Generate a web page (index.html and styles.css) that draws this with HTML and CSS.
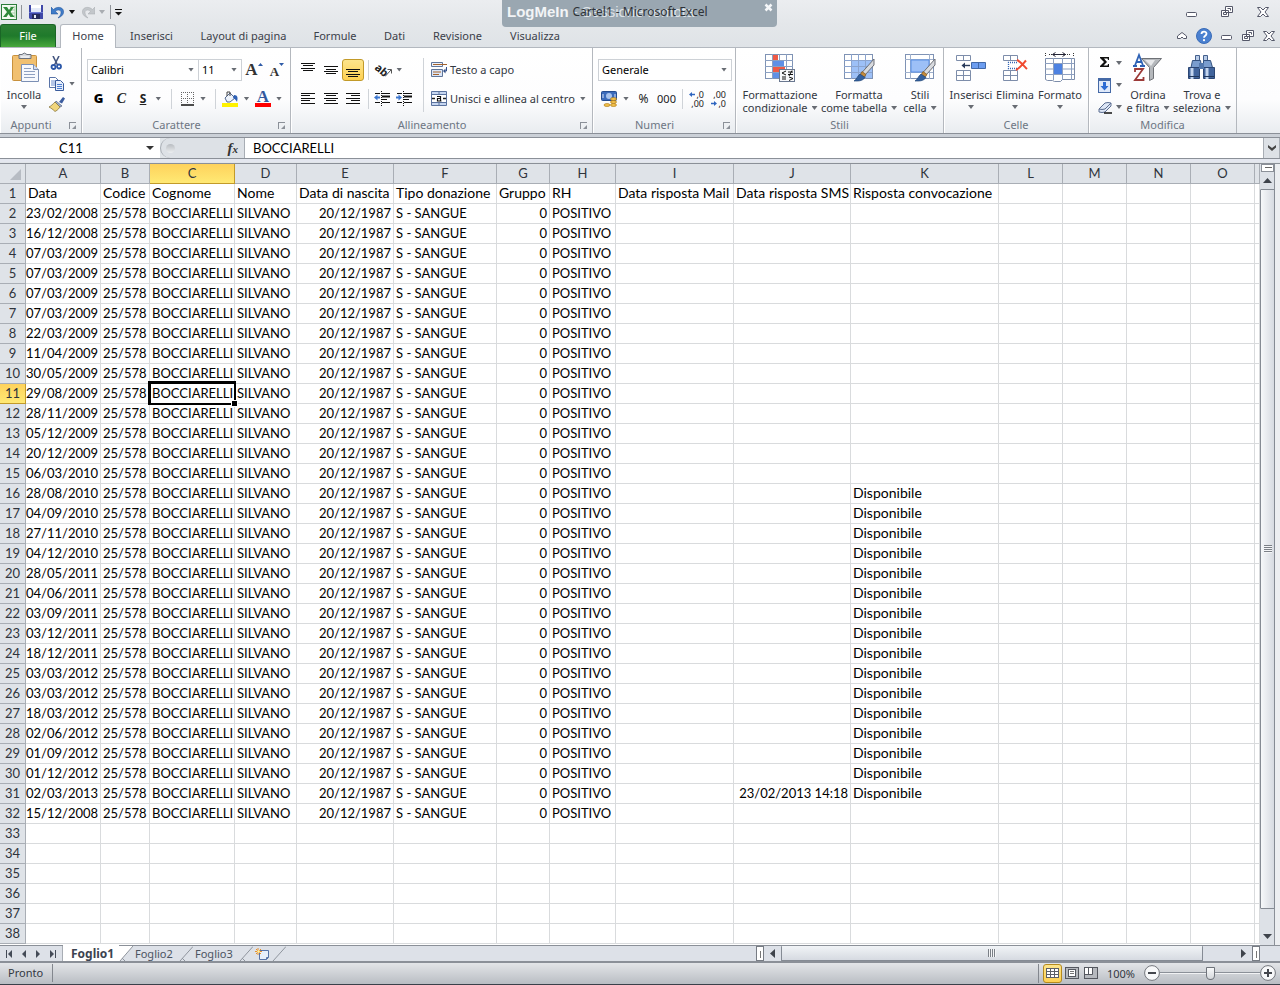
FILE: index.html
```html
<!DOCTYPE html>
<html lang="it">
<head>
<meta charset="utf-8">
<meta name="viewport" content="width=device-width, initial-scale=1">
<title>Cartel1 - Microsoft Excel</title>
<link rel="stylesheet" href="styles.css">
</head>
<body>
<header class="titlebar">
  <div class="quick">
    <svg width="16" height="16" viewBox="0 0 16 16"><rect x=".5" y=".5" width="15" height="15" fill="#f3faf1" stroke="#2d7c3b"/><path d="M9 3h5M9 6h5M9 9h5M9 12h5M14 2v12" stroke="#a5cfa5" fill="none"/><path d="M2 3h4l2 3 2-3h3L9.500 8l4 5H9.500L7.500 10l-2 3H2l4-5z" fill="#2f8a3a"/></svg>
    <span class="qsep"></span>
    <button class="qbtn" aria-label="Salva"><svg width="14" height="14" viewBox="0 0 14 14"><path d="M0 0h14v14H1l-1-1z" fill="#3f48a8"/><path d="M2 0h10v7H2z" fill="#e4eaf8"/><path d="M2 0h10v3H2z" fill="#fff"/><path d="M0 7h14v1H0z" fill="#6b79d2"/><path d="M3 9h8v5H3z" fill="#262b5c"/><path d="M5 10h2v3H5z" fill="#e8ecf6"/></svg></button>
    <button class="qbtn wide" aria-label="Annulla"><svg width="14" height="13" viewBox="0 0 14 13"><path d="M0 1v7h7L4.500 5.500C7 3 10.500 4 10 7c-.3 2-1.500 3.500-3 5 4-1.500 6-4 5.500-7C12 1 6 0 2.500 3.500z" fill="#3f7cc8" stroke="#1f4e94" stroke-width=".5"/></svg><i class="arr black"></i></button>
    <button class="qbtn wide" aria-label="Ripeti"><svg width="14" height="13" viewBox="0 0 14 13"><path d="M14 1v7H7l2.500-2.500C7 3 3.500 4 4 7c.3 2 1.500 3.500 3 5-4-1.500-6-4-5.500-7C2 1 8 0 11.500 3.500z" fill="#c3c7cb" stroke="#a7abaf" stroke-width=".5"/></svg><i class="arr pale"></i></button>
    <span class="qsep"></span>
    <button class="qbtn slim" aria-label="Personalizza"><svg width="7" height="7" viewBox="0 0 7 7"><path d="M0 .5h7" stroke="#111"/><path d="M0 3h7L3.500 6.500z" fill="#111"/></svg></button>
  </div>
  <div class="logmein"><span class="brand">LogMeIn</span><span class="session">- Sessione remota</span><button class="lclose" aria-label="Chiudi"><svg width="9" height="9" viewBox="0 0 9 9"><path d="M1.500 1.500l6 6M7.500 1.500l-6 6" stroke="#f5f7f9" stroke-width="2.500"/></svg></button></div>
  <h1 class="doc">Cartel1 - Microsoft Excel</h1>
  <div class="winbtns">
    <button aria-label="Riduci a icona"><svg width="12" height="12" viewBox="0 0 12 12"><rect x="1.500" y="6.500" width="10" height="4" rx="1" fill="#fff" stroke="#555869"/></svg></button>
    <button aria-label="Ripristina"><svg width="12" height="12" viewBox="0 0 12 12"><path d="M4.500.5h7v6h-7zM.5 4.500h7v6h-7z" fill="#fff" stroke="#555869"/><path d="M6.500 2.500h3v2M2.500 6.500h3v2h-3z" fill="none" stroke="#555869"/></svg></button>
    <button aria-label="Chiudi finestra"><svg width="12" height="12" viewBox="0 0 12 12"><path d="M.5 1.500h3L6 4l2.500-2.500h3L8 6l3.500 4.500h-3L6 8l-2.500 2.500h-3L4 6z" fill="#fff" stroke="#555869"/></svg></button>
  </div>
</header>

<nav class="tabs">
  <button class="tab file">File</button>
  <button class="tab home">Home</button>
  <button class="tab t3">Inserisci</button>
  <button class="tab t4">Layout di pagina</button>
  <button class="tab t5">Formule</button>
  <button class="tab t6">Dati</button>
  <button class="tab t7">Revisione</button>
  <button class="tab t8">Visualizza</button>
  <div class="tabbtns">
    <button aria-label="Riduci barra multifunzione"><svg width="10" height="10" viewBox="0 0 10 10"><path d="M.5 5L5 1.500 9.500 5v2.500h-3L5 6 3.500 7.500h-3z" fill="#fff" stroke="#555869"/></svg></button>
    <button aria-label="Guida"><svg width="16" height="16" viewBox="0 0 16 16"><circle cx="8" cy="8" r="7.500" fill="#4a80d0" stroke="#3a6cb8"/><path d="M5.500 6c0-3.300 5-3.200 5-.2 0 2-2.500 2-2.500 4" fill="none" stroke="#fff" stroke-width="1.800"/><circle cx="8" cy="12.200" r="1.100" fill="#fff"/></svg></button>
    <button aria-label="Riduci cartella"><svg width="12" height="12" viewBox="0 0 12 12"><rect x=".5" y="5.500" width="10" height="4" rx="1" fill="#fff" stroke="#555869"/></svg></button>
    <button aria-label="Ripristina cartella"><svg width="12" height="12" viewBox="0 0 12 12"><path d="M4.500.5h7v6h-7zM.5 4.500h7v6h-7z" fill="#fff" stroke="#555869"/><path d="M6.500 2.500h3v2M2.500 6.500h3v2h-3z" fill="none" stroke="#555869"/></svg></button>
    <button aria-label="Chiudi cartella"><svg width="12" height="12" viewBox="0 0 12 12"><path d="M.5 1.500h3L6 4l2.500-2.500h3L8 6l3.500 4.500h-3L6 8l-2.500 2.500h-3L4 6z" fill="#fff" stroke="#555869"/></svg></button>
  </div>
</nav>

<section class="ribbon">
  <div class="group g-app">
    <div class="body">
      <button class="big b48"><svg width="32" height="32" viewBox="0 0 32 32"><rect x="4.500" y="3.500" width="24" height="25" rx="1" fill="#f1c070" stroke="#c8913d"/><path d="M11 2.500h3q2-3 5 0h4v4H11z" fill="#d6d9de" stroke="#6d737d"/><path d="M13 5h8" stroke="#fff"/><path d="M13.500 12.500h12l5 5v12h-17z" fill="#f7f9fd" stroke="#7b8fb4"/><path d="M25.500 12.500v5h5" fill="#d5def0" stroke="#7b8fb4"/><path d="M16 16.500h7M16 19.500h11M16 22.500h11M16 25.500h11" stroke="#8fa0c0"/></svg><span>Incolla</span><i class="arr"></i></button>
      <div class="stack">
        <button class="ib" aria-label="Taglia"><svg width="14" height="14" viewBox="0 0 14 14"><path d="M4 0l4.500 9M10 0L5.500 9" stroke="#455780" stroke-width="1.600"/><circle cx="4.500" cy="11" r="2" fill="none" stroke="#2b57a8" stroke-width="1.800"/><circle cx="10" cy="10.500" r="2" fill="none" stroke="#2b57a8" stroke-width="1.800"/></svg></button>
        <button class="ib" aria-label="Copia"><svg width="16" height="14" viewBox="0 0 16 14"><path d="M.5.500h6l3 3v7h-9z" fill="#fff" stroke="#5873a8"/><path d="M2 4h4M2 6h4M2 8h4" stroke="#6d8fd0"/><path d="M6.500 3.500h5l3 3v7h-8z" fill="#e6eefb" stroke="#3a5c9c"/><path d="M8 7.500h5M8 9.500h5M8 11.500h5" stroke="#4d7ed1"/></svg><i class="arr"></i></button>
        <button class="ib" aria-label="Copia formato"><svg width="16" height="15" viewBox="0 0 16 15"><path d="M10 5l4-5 2 1.500-3 5z" fill="#3b5c9e"/><path d="M7 4l6 5-2 1-5-4z" fill="#9fb0cc" stroke="#51607c" stroke-width=".7"/><path d="M6 5l5 5c-2 3-4 4-5 4.500C4 12.500 2 11 0 10c2-1 4-3 6-5z" fill="#f0d57c" stroke="#7b6a33" stroke-width=".7"/></svg></button>
      </div>
    </div>
    <div class="glabel">Appunti<button class="launch" aria-label="Opzioni Appunti"></button></div>
  </div>

  <div class="group g-car">
    <div class="body col">
      <div class="line">
        <span class="sel w112"><select aria-label="Tipo di carattere"><option>Calibri</option></select></span><span class="sel w43"><select aria-label="Dimensione carattere"><option>11</option></select></span>
        <button class="ib b24 grow" aria-label="Aumenta carattere"><span>A</span><svg width="5" height="3" viewBox="0 0 5 3"><path d="M0 3l2.500-3L5 3z" fill="#2f5ba8"/></svg></button>
        <button class="ib b22 grow less" aria-label="Riduci carattere"><span>A</span><svg width="5" height="3" viewBox="0 0 5 3"><path d="M0 0l2.500 3L5 0z" fill="#2f5ba8"/></svg></button>
      </div>
      <div class="line">
        <button class="ib b23 bold">G</button><button class="ib b23 ital">C</button><button class="ib b35 under"><u>S</u><i class="arr"></i></button><span class="vsep"></span>
        <button class="ib b37" aria-label="Bordi"><svg width="14" height="14" viewBox="0 0 14 14"><path d="M.5 0v12M6.500 0v12M12.500 0v12M0 .5h13M0 6.500h13" stroke="#666" stroke-dasharray="1 1"/><path d="M0 13h13" stroke="#111" stroke-width="1.500"/></svg><i class="arr"></i></button><span class="vsep"></span>
        <button class="ib b33" aria-label="Colore riempimento"><svg width="17" height="16" viewBox="0 0 17 16"><path d="M3 7l5-5 5 5-5 4H5z" fill="#eef3fb" stroke="#53688f"/><path d="M5 5V1h3v4" fill="none" stroke="#444"/><path d="M12 4c4 0 4 3 3 7-1-2-2-3-4-4z" fill="#2e60b5"/><rect x="0" y="12" width="16" height="4" fill="#fff200"/></svg><i class="arr"></i></button>
        <button class="ib b33" aria-label="Colore carattere"><span class="fontcol">A</span><i class="arr"></i></button>
      </div>
    </div>
    <div class="glabel">Carattere<button class="launch" aria-label="Opzioni Carattere"></button></div>
  </div>

  <div class="group g-all">
    <div class="body">
      <div class="col">
        <div class="line">
          <button class="ib b23" aria-label="Allinea in alto"><svg width="14" height="16" viewBox="0 0 14 16"><path d="M0 1.500h14M2 3.500h10M0 6.500h14M2 8.500h10" stroke="#111"/></svg></button><button class="ib b23" aria-label="Allinea al centro"><svg width="14" height="16" viewBox="0 0 14 16"><path d="M0 4.500h14M2 7.500h10M0 9.500h14M2 11.500h10" stroke="#111"/></svg></button><button class="ib b22 on" aria-label="Allinea in basso"><svg width="14" height="16" viewBox="0 0 14 16"><path d="M0 7.500h14M2 9.500h10M0 12.500h14M2 14.500h10" stroke="#111"/></svg></button><span class="vsep far"></span>
          <button class="ib b35 orient" aria-label="Orientamento"><span class="ab">ab</span><svg width="7" height="10" viewBox="0 0 7 10"><path d="M0 9.500L6 3M2.500 2.500h4v4" fill="none" stroke="#555"/></svg><i class="arr"></i></button>
        </div>
        <div class="line">
          <button class="ib b23" aria-label="Testo a sinistra"><svg width="14" height="12" viewBox="0 0 14 12"><path d="M0 .5h14M0 2.500h9M0 5.500h14M0 7.500h9M0 10.500h14" stroke="#111"/></svg></button><button class="ib b23" aria-label="Centra"><svg width="14" height="12" viewBox="0 0 14 12"><path d="M0 .5h14M2 2.500h10M0 5.500h14M2 7.500h10M0 10.500h14" stroke="#111"/></svg></button><button class="ib b22" aria-label="Testo a destra"><svg width="14" height="12" viewBox="0 0 14 12"><path d="M0 .5h14M5 2.500h9M0 5.500h14M5 7.500h9M0 10.500h14" stroke="#111"/></svg></button><span class="vsep far"></span>
          <button class="ib b22" aria-label="Riduci rientro"><svg width="16" height="15" viewBox="0 0 16 15"><path d="M1 2.500h5M8 2.500h8M8 8.500h5M1 11.500h5M8 11.500h8" stroke="#111"/><path d="M8 5.500h8" stroke="#111" stroke-width="2"/><path d="M7.500 0v15" stroke="#111" stroke-dasharray="1 1"/><path d="M6 6.500H2" stroke="#3e78d0" stroke-width="2"/><path d="M3.500 3.500v6L0 6.500z" fill="#3e78d0"/></svg></button><button class="ib b22" aria-label="Aumenta rientro"><svg width="16" height="15" viewBox="0 0 16 15"><path d="M1 2.500h5M8 2.500h8M8 8.500h5M1 11.500h5M8 11.500h8" stroke="#111"/><path d="M8 5.500h8" stroke="#111" stroke-width="2"/><path d="M7.500 0v15" stroke="#111" stroke-dasharray="1 1"/><path d="M0 6.500h4" stroke="#3e78d0" stroke-width="2"/><path d="M2.500 3.500v6L6 6.500z" fill="#3e78d0"/></svg></button>
        </div>
      </div>
      <span class="vsep tall"></span>
      <div class="col">
        <button class="tb"><svg width="16" height="15" viewBox="0 0 16 15"><path d="M.5.500h11v4H.5z" fill="#eef2fa" stroke="#5f7599"/><path d="M2 2.500h14" stroke="#a5642e"/><path d="M.5 7.500h11v7H.5z" fill="#dbe6f8" stroke="#5f7599"/><path d="M2 10h8M2 12.500h6" stroke="#a5642e"/><path d="M15.500 5v4h-2" fill="none" stroke="#33508a"/><path d="M14.500 6.500v5l-2.500-2.500z" fill="#33508a"/></svg>Testo a capo</button>
        <button class="tb"><svg width="16" height="15" viewBox="0 0 16 15"><path d="M.5.500h15v14H.5zM.5 3.500h15M.5 11.500h15M8 0v3M8 12v3" fill="#c6d6f0" stroke="#5a729e"/><rect x="1" y="4" width="14" height="7" fill="#fff"/><path d="M1 7.500h3M12 7.500h3" stroke="#222" stroke-width="1.500"/><path d="M6 5.500h3.500v4.500M9.500 7.500h-3v2.500h4" fill="none" stroke="#111" stroke-width="1.200"/></svg>Unisci e allinea al centro<i class="arr"></i></button>
      </div>
    </div>
    <div class="glabel">Allineamento<button class="launch" aria-label="Opzioni Allineamento"></button></div>
  </div>

  <div class="group g-num">
    <div class="body col">
      <div class="line"><span class="sel w134"><select aria-label="Formato numero"><option>Generale</option></select></span></div>
      <div class="line">
        <button class="ib b34" aria-label="Formato valuta"><svg width="17" height="16" viewBox="0 0 17 16"><rect x=".5" y=".5" width="15" height="9" rx="1" fill="#3c6bbb" stroke="#254c90"/><ellipse cx="8" cy="5" rx="3" ry="3" fill="#a9c3ec"/><path d="M2 3v4M14 3v4" stroke="#dbe6f8"/><ellipse cx="12.500" cy="8" rx="3" ry="1.500" fill="#f1c04b" stroke="#a87312" stroke-width=".6"/><ellipse cx="12.500" cy="11" rx="3" ry="1.500" fill="#f1c04b" stroke="#a87312" stroke-width=".6"/><ellipse cx="12.500" cy="14" rx="3" ry="1.500" fill="#f1c04b" stroke="#a87312" stroke-width=".6"/><ellipse cx="6" cy="14" rx="3" ry="1.500" fill="#f1c04b" stroke="#a87312" stroke-width=".6"/></svg><i class="arr"></i></button><button class="ib b23 num">%</button><button class="ib b23">000</button><span class="vsep far"></span>
        <button class="ib b22 dec" aria-label="Aumenta decimali"><span><svg width="6" height="5" viewBox="0 0 6 5"><path d="M6 2.500H2" stroke="#2f66c0" stroke-width="1.500"/><path d="M3 0v5L0 2.500z" fill="#2f66c0"/></svg>,0</span><span>,00</span></button><button class="ib b22 dec" aria-label="Riduci decimali"><span>,00</span><span><svg width="6" height="5" viewBox="0 0 6 5"><path d="M0 2.500h4" stroke="#2f66c0" stroke-width="1.500"/><path d="M3 0v5l3-2.500z" fill="#2f66c0"/></svg>,0</span></button>
      </div>
    </div>
    <div class="glabel">Numeri<button class="launch" aria-label="Opzioni Numeri"></button></div>
  </div>

  <div class="group g-sti">
    <div class="body">
      <button class="big b80"><svg width="32" height="32" viewBox="0 0 32 32"><rect x="1.500" y="2.500" width="27" height="24" fill="#fff" stroke="#7f93b5"/><path d="M8.500 2v25M15.500 2v25M22.500 2v25M1 8.500h28M1 14.500h28M1 20.500h28" stroke="#8ba0c2"/><path d="M9 3h5v5H9zM9 15h12v5H9z" fill="#ee5a46"/><path d="M9 9h11v5H9zM9 21h6v5H9z" fill="#5f90e6"/><rect x="15.500" y="17.500" width="15" height="12" fill="#f8f9fc" stroke="#6a7890"/><path d="M22 19l-4 2 4 2M18 25h4M24 20h5M24 22.500h5M28 18.500l-3 5.500M25 25l4 1.500-4 2M18 27h4" fill="none" stroke="#111"/></svg><span>Formattazione<br>condizionale<i class="arr in"></i></span></button>
      <button class="big b76"><svg width="32" height="32" viewBox="0 0 32 32"><rect x="1.500" y="2.500" width="28" height="24" fill="#fff" stroke="#7f93b5"/><rect x="9" y="9" width="20" height="17" fill="#9dc0f7"/><path d="M8.500 2v25M15.500 2v25M22.500 2v25M1 8.500h28M1 14.500h28M1 20.500h28" stroke="#8ba4cf"/><path d="M31 7v6L22 23l-3-2.500z" fill="#d8dade" stroke="#6c6f76"/><path d="M19 19.500l4 3-2 3-4-2.500z" fill="#c48a3b" stroke="#80561c" stroke-width=".7"/><path d="M17 22l5 3.500c-3 4-7 3.500-11 3.500 3-2 3-4.500 6-7z" fill="#34619f" stroke="#234878" stroke-width=".7"/></svg><span>Formatta<br>come tabella<i class="arr in"></i></span></button>
      <button class="big b44"><svg width="32" height="32" viewBox="0 0 32 32"><rect x="1.500" y="2.500" width="28" height="24" fill="#fff" stroke="#7f93b5"/><path d="M6.500 2v25M25.500 2v25M1 7.500h28M1 20.500h28" stroke="#9fb0cc"/><rect x="7" y="8" width="18" height="12" fill="#9dc0f7" stroke="#5b8fe4"/><path d="M31 7v6L22 23l-3-2.500z" fill="#d8dade" stroke="#6c6f76"/><path d="M19 19.500l4 3-2 3-4-2.500z" fill="#c48a3b" stroke="#80561c" stroke-width=".7"/><path d="M17 22l5 3.500c-3 4-7 3.500-11 3.500 3-2 3-4.500 6-7z" fill="#34619f" stroke="#234878" stroke-width=".7"/></svg><span>Stili<br>cella<i class="arr in"></i></span></button>
    </div>
    <div class="glabel">Stili</div>
  </div>

  <div class="group g-cel">
    <div class="body">
      <button class="big b44"><svg width="32" height="32" viewBox="0 0 32 32"><path d="M1.500 3.500h14v5h-14zM8.500 3v5M1.500 18.500h14v10h-14zM8.500 18v10M1.500 23.500h14" fill="#fff" stroke="#7d8daa"/><path d="M16.500 10.500h14v6h-14zM23.500 10.500v6" fill="#6c9df0" stroke="#4269a8"/><path d="M15 13.500H8" stroke="#2a3c5c" stroke-width="1.400"/><path d="M10 10.500v6l-3.500-3z" fill="#2a3c5c"/></svg><span>Inserisci</span><i class="arr"></i></button>
      <button class="big b44"><svg width="32" height="32" viewBox="0 0 32 32"><path d="M4.500 3.500h14v5h-14zM11.500 3v5M4.500 18.500h14v10h-14zM11.500 18v10M4.500 23.500h14" fill="#fff" stroke="#7d8daa"/><path d="M18 10.500H9.500v6H18" fill="none" stroke="#3566b5" stroke-dasharray="1 1" stroke-width="1.300"/><path d="M17 18c4-2 7-6 10-9.500M18 8c3 1 7 6 10 9" fill="none" stroke="#f04a30" stroke-width="2"/></svg><span>Elimina</span><i class="arr"></i></button>
      <button class="big b46"><svg width="32" height="32" viewBox="0 0 32 32"><path d="M1.500 1v4M29.500 1v4M5 2.500h22" stroke="#333" stroke-dasharray="1 1"/><path d="M9 2.500h12M11.500 .500l-3 2 3 2M18.500 .500l3 2-3 2" fill="none" stroke="#223"/><path d="M1.500 6.500h29v21h-12l-2 2h-6l-2-1h-5l-2-1z" fill="#fff" stroke="#7d8daa"/><path d="M1 11.500h29M1 22.500h29M9.500 6v22M18.500 6v22M27.500 6v22M1 17h8M19 17h11" stroke="#8da0c0"/><rect x="10" y="12" width="8" height="10" fill="#4d82e2"/></svg><span>Formato</span><i class="arr"></i></button>
    </div>
    <div class="glabel">Celle</div>
  </div>

  <div class="group g-mod">
    <div class="body">
      <div class="stack">
        <button class="ib" aria-label="Somma"><svg width="14" height="14" viewBox="0 0 14 14"><path d="M2 1h9v3h-1L9.500 2.500H6L9 6l-3.500 3.500H9.500L10 8h1v3H2v-1l4-4-4-4z" fill="#111"/></svg><i class="arr"></i></button>
        <button class="ib" aria-label="Riempimento"><svg width="14" height="15" viewBox="0 0 14 15"><rect x=".5" y=".5" width="12" height="14" fill="#dfe9fa" stroke="#4569a6"/><path d="M1 2h11" stroke="#4569a6" stroke-width="2"/><path d="M5 4h3v4h2.500l-4 4.500-4-4.500H5z" fill="#2c6bd4"/></svg><i class="arr"></i></button>
        <button class="ib" aria-label="Cancella"><svg width="14" height="13" viewBox="0 0 14 13"><path d="M1 8l6-6q3-1 6 0v3l-6 6q-3 1-6 0z" fill="#dde6f5" stroke="#5c6e91"/><path d="M1 8q3 1 6 0l6-6" fill="none" stroke="#5c6e91"/><path d="M6 12h8" stroke="#111" stroke-width="1.500"/></svg><i class="arr"></i></button>
      </div>
      <button class="big b48"><svg width="32" height="32" viewBox="0 0 32 32"><path d="M9.500 6.500h20l-8 9v11l-4 2v-13z" fill="#b5b8bc" stroke="#6e7176"/><path d="M13 8h10l-4 6z" fill="#e7e8ea"/><path d="M1 14h4M8 14h5M3 13.500L7 3l4 10.500M4.500 10h5" fill="none" stroke="#2e62b5" stroke-width="1.800"/><path d="M3 20v-3h8L3 28h8.500v-3" fill="none" stroke="#9c3a38" stroke-width="1.800"/></svg><span>Ordina<br>e filtra<i class="arr in"></i></span></button>
      <button class="big b60"><svg width="32" height="32" viewBox="0 0 32 32"><path d="M9.500 3.500h4v5h-4zM17.500 3.500h4v5h-4z" fill="#b9cce8" stroke="#45608c"/><path d="M6.500 8.500h8l1 7H5zM17.500 8.500h7l2 7h-9z" fill="#7a9dce" stroke="#34527f"/><path d="M2.500 15.500h11v11h-11zM17.500 15.500h11v11h-11z" fill="#41649c" stroke="#2c4673"/><path d="M6 16v11M21 16v11" stroke="#c4d5ee" stroke-width="3"/><path d="M13 11h5v6h-5z" fill="#5479ae"/><path d="M3 24.500h10M18 24.500h10" stroke="#20365a"/></svg><span>Trova e<br>seleziona<i class="arr in"></i></span></button>
    </div>
    <div class="glabel">Modifica</div>
  </div>
</section>

<section class="formula">
  <div class="namebox"><input aria-label="Casella Nome" value="C11"><i class="arr dark"></i></div>
  <div class="fx"><span class="knob"></span><button class="fxbtn" aria-label="Inserisci funzione"><i>f</i><small>x</small></button></div>
  <input class="fvalue" aria-label="Barra della formula" value="BOCCIARELLI">
  <button class="expand" aria-label="Espandi barra della formula"><svg width="8" height="6" viewBox="0 0 8 6"><path d="M0 0l4 3 4-3v2.500L4 6 0 2.500z" fill="#444"/></svg></button>
</section>

<main class="work">
  <div class="sheet">
    <table class="grid">
      <colgroup><col class="c-h"><col class="c-a"><col class="c-b"><col class="c-c"><col class="c-d"><col class="c-e"><col class="c-f"><col class="c-g"><col class="c-hh"><col class="c-i"><col class="c-j"><col class="c-k"><col class="c-n"><col class="c-n"><col class="c-n"><col class="c-n"><col></colgroup>
      <thead><tr><th class="corner"></th><th>A</th><th>B</th><th class="cur">C</th><th>D</th><th>E</th><th>F</th><th>G</th><th>H</th><th>I</th><th>J</th><th>K</th><th>L</th><th>M</th><th>N</th><th>O</th><th></th></tr></thead>
      <tbody id="rows"></tbody>
    </table>
  </div>
  <div class="vscroll">
    <div class="vsplit"></div>
    <button class="sbtn" aria-label="Scorri in alto"><i class="tri up"></i></button>
    <div class="vthumb"><span class="grip"></span></div>
    <button class="sbtn low" aria-label="Scorri in basso"><i class="tri down"></i></button>
  </div>
</main>

<div class="sheetbar">
  <div class="snav">
    <button aria-label="Primo foglio"><svg width="8" height="8" viewBox="0 0 8 8"><path d="M1.500 0v8" stroke="#444b57"/><path d="M7 0v8L3 4z" fill="#444b57"/></svg></button>
    <button aria-label="Foglio precedente"><svg width="8" height="8" viewBox="0 0 8 8"><path d="M6 0v8L2 4z" fill="#444b57"/></svg></button>
    <button aria-label="Foglio successivo"><svg width="8" height="8" viewBox="0 0 8 8"><path d="M2 0v8l4-4z" fill="#444b57"/></svg></button>
    <button aria-label="Ultimo foglio"><svg width="8" height="8" viewBox="0 0 8 8"><path d="M6.500 0v8" stroke="#444b57"/><path d="M1 0v8l4-4z" fill="#444b57"/></svg></button>
  </div>
  <button class="stab active">Foglio1</button><svg class="slant" viewBox="0 0 14 16"><path d="M0 0h14L1 15H0z" fill="#fff"/><path d="M14 0L1 15M3 12l3 3" stroke="#8f959d" fill="none"/></svg>
  <button class="stab">Foglio2</button><svg class="slant" viewBox="0 0 14 16"><path d="M14 .5L1 15M3 12l3 3" stroke="#8f959d" fill="none"/></svg>
  <button class="stab">Foglio3</button><svg class="slant" viewBox="0 0 14 16"><path d="M14 .5L1 15M3 12l3 3" stroke="#8f959d" fill="none"/></svg>
  <button class="stab new" aria-label="Inserisci foglio di lavoro"><svg width="16" height="14" viewBox="0 0 16 14"><path d="M4.500 3.500h9v7l-2 2h-7z" fill="#e8effb" stroke="#5873a8"/><path d="M11.500 12.500v-2h2" fill="none" stroke="#5873a8"/><path d="M3 1v7M0 4.500h7M1 2l5 5M6 2L1 7" stroke="#e8902c"/><circle cx="3.500" cy="4.500" r="1.300" fill="#fff3a0"/></svg></button><svg class="slant" viewBox="0 0 14 16"><path d="M14 .5L1 15" stroke="#8f959d" fill="none"/></svg>
  <div class="hscroll">
    <span class="hsplit"></span>
    <button class="hbtn" aria-label="Scorri a sinistra"><i class="tri left"></i></button>
    <div class="htrack"><div class="hthumb"><span class="grip v"></span></div></div>
    <button class="hbtn" aria-label="Scorri a destra"><i class="tri right"></i></button>
    <span class="hsplit"></span>
  </div>
</div>

<footer class="status">
  <span class="ready">Pronto</span>
  <div class="views">
    <button class="on" aria-label="Normale"><svg width="13" height="10" viewBox="0 0 13 10"><rect width="13" height="10" fill="#5c5f66"/><path d="M1 1h3v2H1zM5 1h3v2H5zM9 1h3v2H9zM1 4h3v2H1zM5 4h3v2H5zM9 4h3v2H9zM1 7h3v2H1zM5 7h3v2H5zM9 7h3v2H9z" fill="#fff"/></svg></button>
    <button aria-label="Layout di pagina"><svg width="14" height="12" viewBox="0 0 14 12"><rect x=".5" y=".5" width="13" height="11" fill="#b6b9be" stroke="#55585f"/><rect x="3.500" y="2.500" width="7" height="7" fill="#fff" stroke="#55585f"/><path d="M5 4.500h4M5 6.500h4" stroke="#777"/></svg></button>
    <button aria-label="Anteprima interruzioni di pagina"><svg width="14" height="12" viewBox="0 0 14 12"><rect x=".5" y=".5" width="13" height="11" fill="#b6b9be" stroke="#55585f"/><path d="M1 1h3v6H1zM5 1h3v6H5z" fill="#fff"/><path d="M4.500 0v7M8.500 0v7.500H0" stroke="#55585f" fill="none"/></svg></button>
  </div>
  <button class="pct">100%</button>
  <button class="round" aria-label="Zoom indietro"><svg width="16" height="16" viewBox="0 0 16 16"><circle cx="8" cy="8" r="7.400" fill="#f7f8f9" stroke="#74777d"/><path d="M4 8h8" stroke="#44474d" stroke-width="2"/></svg></button>
  <input class="zoom" type="range" min="10" max="190" value="100" aria-label="Zoom">
  <button class="round" aria-label="Zoom avanti"><svg width="16" height="16" viewBox="0 0 16 16"><circle cx="8" cy="8" r="7.400" fill="#f7f8f9" stroke="#74777d"/><path d="M4 8h8M8 4v8" stroke="#44474d" stroke-width="2"/></svg></button>
</footer>
<script src="app.js"></script>
</body>
</html>
```

FILE: styles.css
```css
* { box-sizing: border-box; }

body {
  margin: 0;
  height: 100vh;
  display: flex;
  flex-direction: column;
  overflow: hidden;
  background: #e1e5e9;
  color: #333842;
  font: 11px/13px "Noto Sans", "Open Sans", sans-serif;
  border-bottom: 1px solid #3a404a;
}

button, input, select {
  font: inherit;
  color: inherit;
  margin: 0;
  padding: 0;
  border: 0;
  background: none;
  border-radius: 0;
}

svg { display: block; flex: none; }

.arr {
  flex: none;
  display: inline-block;
  width: 6px;
  height: 4px;
  background: #686c73;
  clip-path: polygon(0 0, 100% 0, 50% 100%);
}
.arr.black { background: #111; }
.arr.pale { background: #a9adb2; }
.arr.dark { background: #333; width: 8px; }
.arr.in { margin: 0 0 2px 4px; }

/* Title bar */
.titlebar {
  position: relative;
  flex: none;
  height: 24px;
  display: flex;
  align-items: center;
  justify-content: space-between;
  background: linear-gradient(#ebedf0, #e4e7ea);
}
.quick { display: flex; align-items: center; padding-left: 1px; gap: 4px; }
.qbtn { display: flex; align-items: center; gap: 4px; padding: 0 3px; }
.qbtn.wide { padding: 0 1px; }
.qbtn.slim { padding: 0; }
.qsep { width: 1px; height: 14px; background: #8f9399; }
.logmein {
  position: absolute;
  top: 0;
  left: calc(50% - 138px);
  width: 275px;
  height: 27px;
  border-radius: 0 0 4px 4px;
  background: #9aa7b1;
  font: 15px/23px "Liberation Sans", Arial, sans-serif;
  color: #f2f4f6;
  padding-left: 5px;
  display: flex;
  gap: 4px;
}
.brand { font-weight: bold; }
.session { color: #dfe4e8; }
.lclose { position: absolute; right: 4px; top: 3px; }
.doc {
  position: absolute;
  left: 0;
  right: 0;
  top: 5px;
  margin: 0;
  text-align: center;
  font-size: 12px;
  font-weight: normal;
  line-height: 14px;
  color: #2f3338;
  pointer-events: none;
}
.winbtns { display: flex; gap: 24px; padding-right: 11px; }

/* Ribbon tabs */
.tabs {
  flex: none;
  height: 24px;
  display: flex;
  background: linear-gradient(#e4e7ea, #dfe3e7);
  border-bottom: 1px solid #b3b8bf;
}
.tab { height: 23px; color: #3b4049; }
.file {
  width: 56px;
  padding-bottom: 2px;
  color: #fff;
  background: linear-gradient(#2d7f34, #1f7a2b 50%, #48a83c);
  border: 1px solid #1a6626;
  border-bottom: 0;
  border-radius: 3px 3px 0 0;
}
.home {
  width: 56px;
  height: 24px;
  margin-left: 4px;
  padding-bottom: 2px;
  background: #fff;
  border: 1px solid #b3b8bf;
  border-bottom: 0;
  border-radius: 3px 3px 0 0;
}
.t3 { width: 71px; }
.t4 { width: 113px; }
.t5 { width: 70px; }
.t6 { width: 49px; }
.t7 { width: 77px; }
.t8 { width: 78px; }
.tabbtns {
  margin-left: auto;
  display: flex;
  align-items: center;
  gap: 9px;
  padding-right: 5px;
}

/* Ribbon */
.ribbon {
  flex: none;
  height: 86px;
  display: flex;
  background: linear-gradient(#fff, #fdfdfe 60%, #e9ecf0);
  border-bottom: 1px solid #8b9098;
}
.group {
  flex: none;
  display: flex;
  flex-direction: column;
  border-right: 1px solid #b4b8be;
  box-shadow: inset 1px 0 #fff;
}
.g-app { width: 82px; }
.g-car { width: 209px; }
.g-all { width: 302px; }
.g-num { width: 143px; }
.g-sti { width: 208px; }
.g-cel { width: 145px; }
.g-mod { width: 148px; }
.body { flex: 1; min-height: 0; display: flex; padding-top: 4px; }
.col { display: flex; flex-direction: column; gap: 6px; }
.body.col { padding: 10px 0 0 5px; }
.line { display: flex; align-items: center; height: 23px; }
.glabel {
  position: relative;
  flex: none;
  height: 16px;
  line-height: 15px;
  text-align: center;
  color: #6d7683;
}
.g-app .glabel, .g-car .glabel, .g-all .glabel, .g-num .glabel { padding-right: 19px; }
.launch {
  position: absolute;
  right: 5px;
  bottom: 4px;
  width: 7px;
  height: 7px;
  border: solid #8b9098;
  border-width: 1px 0 0 1px;
}
.launch::after {
  content: "";
  position: absolute;
  right: 0;
  bottom: 0;
  width: 4px;
  height: 4px;
  background: #8b9098;
  clip-path: polygon(100% 0, 100% 100%, 0 100%);
}
.big { display: flex; flex-direction: column; align-items: center; flex: none; }
.big span { margin-top: 4px; white-space: nowrap; }
.big > .arr { margin-top: 4px; }
.b44 { width: 44px; }
.b46 { width: 46px; }
.b48 { width: 48px; }
.b60 { width: 60px; }
.b76 { width: 76px; }
.b80 { width: 80px; }
.stack { display: flex; flex-direction: column; width: 33px; }
.stack .ib { height: 22px; justify-content: flex-start; padding-left: 1px; gap: 4px; }
.g-app .stack .ib { height: 21px; }
.ib {
  display: flex;
  align-items: center;
  justify-content: center;
  gap: 5px;
  height: 22px;
  flex: none;
  color: #222;
}
.b22 { width: 22px; }
.b23 { width: 23px; }
.b24 { width: 24px; }
.b33 { width: 33px; }
.b34 { width: 34px; }
.b35 { width: 35px; }
.b37 { width: 37px; }
.on {
  background: linear-gradient(#fde58c, #fed052);
  border: 1px solid #c29a29;
  border-radius: 3px;
}
.bold { font-size: 13px; font-weight: 900; color: #000; }
.ital { font: italic bold 14px "Liberation Serif", serif; }
.under { font-size: 12px; font-weight: bold; gap: 9px; }
.num { font-size: 12px; }
.grow { font: bold 17px/22px "Liberation Serif", serif; gap: 0; align-items: flex-start; color: #333; }
.grow svg { margin-top: 4px; }
.grow.less { font-size: 13px; line-height: 25px; }
.fontcol { width: 16px; height: 17px; font: bold 17px/14px "Liberation Serif", serif; color: #34599e; border-bottom: 4px solid #f00; text-align: center; }
.orient { gap: 1px; }
.orient .arr { margin-left: 3px; }
.ab { font-size: 11px; font-weight: bold; line-height: 12px; transform: rotate(40deg); }
.orient svg { margin-top: 4px; margin-left: -4px; }
.dec { flex-direction: column; align-items: flex-end; gap: 0; padding-right: 3px; font-size: 9px; line-height: 9px; }
.dec span { display: flex; align-items: center; gap: 1px; }
.vsep { width: 1px; height: 20px; background: #cfd3d8; margin: 0 3px; flex: none; }
.vsep.far { margin: 0 2px 0 4px; }
.vsep.tall { height: 54px; margin: 6px 7px 0 8px; }
.g-all .body { padding: 4px 0 0 5px; }
.g-all .col { padding-top: 6px; }
.tb { display: flex; align-items: center; gap: 3px; height: 23px; white-space: nowrap; }
.tb .arr { margin-left: 2px; }
.g-sti .body { padding-left: 4px; gap: 1px; }
.g-cel .body { padding-left: 5px; }
.g-mod .body { padding-left: 8px; }
.g-mod .stack { width: 27px; }
.sel {
  position: relative;
  display: block;
  flex: none;
  height: 22px;
  border: 1px solid #cdd1d6;
  background: #fff;
}
.sel + .sel { border-left: 0; }
.sel select {
  appearance: none;
  width: 100%;
  height: 20px;
  padding-left: 3px;
  color: #000;
}
.sel::after {
  content: "";
  position: absolute;
  right: 4px;
  top: 8px;
  width: 6px;
  height: 4px;
  background: #686c73;
  clip-path: polygon(0 0, 100% 0, 50% 100%);
  pointer-events: none;
}
.w112 { width: 112px; }
.w43 { width: 43px; }
.w134 { width: 134px; }

/* Formula bar */
.formula {
  flex: none;
  height: 25px;
  margin-top: 3px;
  margin-bottom: 1px;
  display: flex;
  border-top: 1px solid #8b9098;
  border-bottom: 3px solid #e4e7ef;
  box-shadow: 0 -3px #cbd0d7, inset 0 -1px #8b9098;
  color: #000;
  font: 13px/20px Lato, Carlito, sans-serif;
}
.namebox { width: 160px; height: 20px; background: #fff; display: flex; align-items: center; }
.namebox input { flex: 1; min-width: 0; height: 20px; text-align: center; padding-right: 4px; }
.namebox .arr { margin-right: 6px; }
.fx {
  width: 85px;
  height: 20px;
  display: flex;
  align-items: center;
  justify-content: space-between;
  padding: 0 6px 0 5px;
  background: #dde1e6;
  border: 1px solid #a8adb4;
  border-width: 0 1px 0 1px;
  border-radius: 10px 0 0 10px;
}
.knob { width: 9px; height: 9px; border-radius: 50%; background: linear-gradient(#b8bcc1, #eceef0); }
.fxbtn { font: bold 15px/18px "Liberation Serif", serif; color: #333; }
.fxbtn small { font-size: 11px; font-style: italic; }
.fvalue { flex: 1; min-width: 0; height: 20px; background: #fff; padding-left: 8px; }
.expand {
  width: 17px;
  height: 20px;
  display: flex;
  align-items: center;
  justify-content: center;
  background: #dde1e6;
  border: solid #a8adb4;
  border-width: 0 1px;
}

/* Worksheet */
.work { flex: 1; min-height: 0; display: flex; border-top: 1px solid #8b9098; }
.sheet { flex: 1; min-width: 0; overflow: hidden; background: #fff; }
.grid {
  width: 100%;
  table-layout: fixed;
  border-collapse: separate;
  border-spacing: 0;
  font: 13px/19px Lato, Carlito, sans-serif;
  color: #000;
}
.c-h { width: 26px; }
.c-a { width: 75px; }
.c-b { width: 49px; }
.c-c { width: 85px; }
.c-d { width: 62px; }
.c-e { width: 97px; }
.c-f { width: 103px; }
.c-g { width: 53px; }
.c-hh { width: 66px; }
.c-i { width: 118px; }
.c-j { width: 117px; }
.c-k { width: 148px; }
.c-n { width: 64px; }
.grid th, .grid td {
  height: 20px;
  padding: 0 0 0 2px;
  border: solid #d9dbdd;
  border-width: 0 1px 1px 0;
  white-space: nowrap;
  text-align: left;
}
.grid th {
  padding: 0;
  text-align: center;
  font-weight: normal;
  background: #dfe3e8;
  color: #2f343c;
  border-color: #a9aeb5;
}
.grid th.cur { background: linear-gradient(#fed25c, #ffe974); border-color: #c29a29; }
.grid td.r { text-align: right; padding: 0 2px 0 0; }
.grid td.words { font-size: 14px; line-height: 17px; padding-bottom: 2px; }
.corner { position: relative; }
.corner::after {
  content: "";
  position: absolute;
  right: 4px;
  bottom: 3px;
  width: 11px;
  height: 11px;
  background: #b7bcc3;
  clip-path: polygon(100% 0, 100% 100%, 0 100%);
}
.grid td.active { position: relative; }
.grid td.active::before {
  content: "";
  position: absolute;
  inset: -3px -2px -2px;
  border: 3px solid #000;
  border-width: 3px 2px 2px 3px;
}
.grid td.active::after {
  content: "";
  position: absolute;
  right: -3px;
  bottom: -3px;
  width: 5px;
  height: 5px;
  background: #000;
  box-shadow: 0 0 0 1px #fff;
}

/* Scroll bars */
.vscroll {
  flex: none;
  width: 20px;
  display: flex;
  flex-direction: column;
  padding-right: 5px;
  background: linear-gradient(90deg, #dde1e7 14px, #8b9098 14px, #8b9098 15px, #eceef1 15px);
}
.vsplit { height: 8px; margin: 0 1px; background: linear-gradient(#666, #666) 3px 2px / 7px 1px no-repeat #fff; border: 1px solid #8b9098; }
.sbtn { height: 17px; display: flex; align-items: center; justify-content: center; }
.vthumb {
  height: 720px;
  border: 1px solid #858b94;
  border-radius: 1px;
  background: linear-gradient(90deg, #f6f8fa, #d6dae1);
  display: flex;
  align-items: center;
  justify-content: center;
}
.low { margin-top: auto; }
.grip { width: 8px; height: 8px; background: repeating-linear-gradient(#7b8087 0 1px, #f4f5f7 1px 2px); }
.grip.v { background: repeating-linear-gradient(90deg, #7b8087 0 1px, #f4f5f7 1px 2px); }
.tri { background: #3e434b; }
.tri.up, .tri.down { width: 9px; height: 5px; }
.tri.left, .tri.right { width: 5px; height: 9px; }
.up { clip-path: polygon(50% 0, 100% 100%, 0 100%); }
.down { clip-path: polygon(0 0, 100% 0, 50% 100%); }
.left { clip-path: polygon(100% 0, 100% 100%, 0 50%); }
.right { clip-path: polygon(0 0, 100% 50%, 0 100%); }

/* Sheet tabs */
.sheetbar {
  flex: none;
  height: 18px;
  display: flex;
  background: #dde1e8;
  border-top: 1px solid #8b9098;
  border-bottom: 2px solid #8b9098;
  color: #4b5462;
}
.snav { width: 63px; padding: 0 5px; display: flex; align-items: center; justify-content: space-between; border-right: 1px solid #a8adb4; }
.stab { width: 46px; height: 15px; padding-left: 2px; line-height: 15px; text-align: left; }
.stab.active { width: 56px; padding: 1px 0 0 8px; background: #fff; font-size: 12px; font-weight: bold; margin-top: -1px; height: 16px; color: #3c4350; }
.stab.new { width: 19px; padding: 0; display: flex; align-items: center; justify-content: center; }
.slant { width: 14px; height: 16px; }
.hscroll { margin-left: auto; width: 504px; margin-right: 20px; display: flex; }
.hsplit { flex: none; width: 8px; border: 1px solid #777c84; background: linear-gradient(#777, #777) 3px 4px / 1px 7px no-repeat #fff; }
.hbtn { flex: none; width: 17px; display: flex; align-items: center; justify-content: center; }
.htrack { flex: 1; display: flex; }
.hthumb {
  width: 93%;
  border: 1px solid #858b94;
  border-top: 0;
  border-radius: 1px;
  background: linear-gradient(#f1f4f7, #d6dae1);
  display: flex;
  align-items: center;
  justify-content: center;
}

/* Status bar */
.status {
  flex: none;
  height: 21px;
  display: flex;
  align-items: center;
  background: linear-gradient(#e3e5e8, #b9bdc3);
  padding: 0 4px 1px 0;
}
.ready { width: 53px; padding-left: 8px; line-height: 18px; border-right: 1px solid #83878e; }
.views { margin-left: auto; padding-left: 4px; border-left: 1px solid #83878e; display: flex; align-items: center; gap: 5px; }
.views .on { width: 19px; height: 19px; display: flex; align-items: center; justify-content: center; border-color: #b58a1e; margin-right: -2px; }
.pct { width: 46px; }
.round { flex: none; }
.zoom {
  appearance: none;
  width: 100px;
  height: 16px;
  background: linear-gradient(transparent 7px, #8b9098 7px, #8b9098 8px, #f1f2f4 8px, #f1f2f4 9px, transparent 9px);
}
.zoom::-webkit-slider-thumb {
  appearance: none;
  width: 9px;
  height: 13px;
  background: linear-gradient(#f8f9fa, #d5d8dc) padding-box;
  border: 1px solid #6f737a;
  border-radius: 1px 1px 5px 5px;
}
```

FILE: app.js
```js
const headings = ["Data", "Codice", "Cognome", "Nome", "Data di nascita", "Tipo donazione", "Gruppo", "RH",
  "Data risposta Mail", "Data risposta SMS", "Risposta convocazione"];
const dates = ["23/02/2008", "16/12/2008", "07/03/2009", "07/03/2009", "07/03/2009", "07/03/2009", "22/03/2009",
  "11/04/2009", "30/05/2009", "29/08/2009", "28/11/2009", "05/12/2009", "20/12/2009", "06/03/2010", "28/08/2010",
  "04/09/2010", "27/11/2010", "04/12/2010", "28/05/2011", "04/06/2011", "03/09/2011", "03/12/2011", "18/12/2011",
  "03/03/2012", "03/03/2012", "18/03/2012", "02/06/2012", "01/09/2012", "01/12/2012", "02/03/2013", "15/12/2008"];
const columns = 16;
const answerColumn = 10;
const rightAligned = [0, 4, 6, 9];
const body = document.getElementById("rows");

function valuesFor(row) {
  if (row === 1) return headings;
  const date = dates[row - 2];
  if (!date) return [];
  return [date, "25/578", "BOCCIARELLI", "SILVANO", "20/12/1987", "S - SANGUE", "0", "POSITIVO", "",
    row === 31 ? "23/02/2013 14:18" : "", row >= 16 && row <= 31 ? "Disponibile" : ""];
}

for (let row = 1; row <= 38; row++) {
  const tr = body.insertRow();
  const head = document.createElement("th");
  head.textContent = row;
  if (row === 11) head.className = "cur";
  tr.append(head);
  const values = valuesFor(row);
  for (let c = 0; c < columns; c++) {
    const td = tr.insertCell();
    td.textContent = values[c] || "";
    if (row > 1 && rightAligned.includes(c)) td.classList.add("r");
    if (row === 1 || c === answerColumn) td.classList.add("words");
    if (row === 11 && c === 2) td.classList.add("active");
  }
}
```
